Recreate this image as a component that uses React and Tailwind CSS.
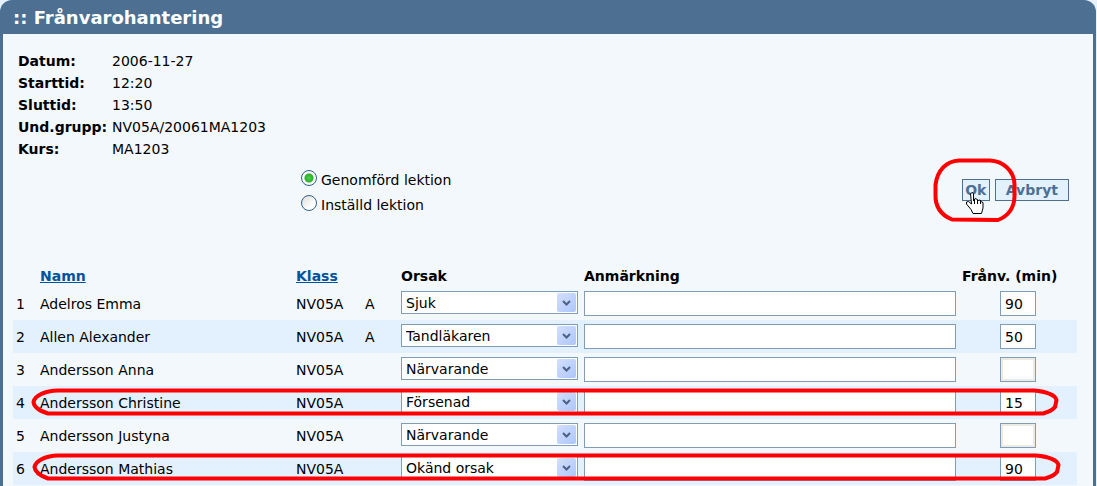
import React, { useState } from "react";

const details = [
  { label: "Datum:", value: "2006-11-27" },
  { label: "Starttid:", value: "12:20" },
  { label: "Sluttid:", value: "13:50" },
  { label: "Und.grupp:", value: "NV05A/20061MA1203" },
  { label: "Kurs:", value: "MA1203" },
];

const reasons = ["Närvarande", "Sjuk", "Tandläkaren", "Försenad", "Okänd orsak"];

const students = [
  { name: "Adelros Emma", group: "NV05A", flag: "A", reason: "Sjuk", minutes: "90" },
  { name: "Allen Alexander", group: "NV05A", flag: "A", reason: "Tandläkaren", minutes: "50" },
  { name: "Andersson Anna", group: "NV05A", flag: "", reason: "Närvarande", minutes: "" },
  { name: "Andersson Christine", group: "NV05A", flag: "", reason: "Försenad", minutes: "15" },
  { name: "Andersson Justyna", group: "NV05A", flag: "", reason: "Närvarande", minutes: "" },
  { name: "Andersson Mathias", group: "NV05A", flag: "", reason: "Okänd orsak", minutes: "90" },
];

// --- UI COMPONENTS ---

const Radio = ({ label, ...props }) => (
  <label className="flex h-6 items-center gap-1">
    <input
      type="radio"
      name="lesson"
      className="h-4 w-4 appearance-none rounded-full border border-[#2f5f8c] bg-[linear-gradient(135deg,#dcdcd6,#ffffff_70%)] checked:bg-[radial-gradient(circle_at_50%_50%,#4fd04a_0,#2bb02b_4px,#f8f8f6_5px)]"
      {...props}
    />
    <span className="pt-1">{label}</span>
  </label>
);

const ReasonSelect = ({ value, onChange, ...props }) => (
  <div className="relative">
    <select
      value={value}
      onChange={onChange}
      className="block h-[23px] w-full appearance-none border border-[#7f9db9] bg-white pr-6 pl-1 leading-5"
      {...props}
    >
      {reasons.map((reason) => (
        <option key={reason}>{reason}</option>
      ))}
    </select>
    <span className="pointer-events-none absolute top-0.5 right-0.5 flex h-[19px] w-[19px] items-center justify-center rounded-xs bg-linear-to-br from-[#d3dffe] to-[#adc6f8]">
      <svg width="9" height="6" viewBox="0 0 9 6" fill="none">
        <path d="M1 1L4.5 4.5L8 1" stroke="#4d6185" strokeWidth="2" />
      </svg>
    </span>
  </div>
);

const StudentRow = ({ index, student, onChange }) => (
  <tr className="h-[33px] even:bg-[#e3f1ff]">
    <td className="px-[3px]">{index + 1}</td>
    <td className="px-[3px]">{student.name}</td>
    <td className="px-[3px]">{student.group}</td>
    <td className="px-[3px]">{student.flag}</td>
    <td className="px-[3px] py-1 align-top">
      <ReasonSelect
        aria-label={`Orsak ${student.name}`}
        value={student.reason}
        onChange={(e) => onChange({ reason: e.target.value })}
      />
    </td>
    <td className="px-[3px] py-1">
      <input
        type="text"
        aria-label={`Anmärkning ${student.name}`}
        className="block h-[25px] w-full border border-[#7f9db9] bg-white px-1"
      />
    </td>
    <td className="px-[3px] py-1">
      <input
        type="text"
        aria-label={`Frånvaro ${student.name}`}
        value={student.minutes}
        disabled={student.reason === "Närvarande"}
        onChange={(e) => onChange({ minutes: e.target.value })}
        className="mx-auto block h-[25px] w-9 border border-[#7f9db9] bg-white px-1 disabled:inset-ring-2 disabled:inset-ring-[#ebebe4]"
      />
    </td>
  </tr>
);

// Red pen marks and the hand pointer on top of the form
const Annotations = () => (
  <svg
    className="pointer-events-none absolute top-0 left-0"
    width="1097"
    height="486"
    viewBox="0 0 1097 486"
    fill="none"
    aria-hidden="true"
  >
    <g stroke="#ff0000" strokeWidth="4" strokeLinejoin="round">
      <path d="M959 160.500H990C1003 161 1014 171 1014.500 184V197C1014 208 1008 216 998 220L952 219.500C941 215 935 206 935.500 194V185C937 171 946 161 959 160.500Z" />
      <path d="M58 390.500H1034C1046 391.500 1055 395 1056.500 400L1055 407C1052 411 1048 412 1043 413.500H48C40 411 34 408 33.500 402C35 395 45 391 58 390.500Z" />
      <path d="M58 455.500H1036C1048 456.500 1057 460 1058.500 465L1057 472C1054 476 1050 477 1045 478.500H48C41 476 35 473 34.500 467C36 460 46 456 58 455.500Z" />
    </g>
    <path
      d="M970.500 193.500L972.500 192.500L973.500 194V201L975 198.500L977.500 199.500L978 200.500L980 200L981.500 202L983 202.500V208L981.500 213.500H973L971 209.500L966.500 204V202L968.500 201.500L971.500 204Z"
      fill="#fff"
      stroke="#000"
    />
    <path d="M974.500 199V204M977.500 200V204M980.500 201V204" stroke="#000" />
  </svg>
);

// --- MAIN PAGE ---

export default function App() {
  const [rows, setRows] = useState(students);
  const [held, setHeld] = useState(true);

  const updateRow = (index, change) =>
    setRows(rows.map((row, i) => (i === index ? { ...row, ...change } : row)));

  return (
    <div className="relative min-h-screen overflow-hidden bg-[#e6f1fc] pr-px font-['DejaVu_Sans',Verdana,sans-serif] text-sm text-black">
      <main className="flex min-h-screen flex-col overflow-hidden rounded-t-xl bg-[#4d7092]">
        <h1 className="flex h-[34px] items-center px-[13px] pt-0.5 text-lg font-bold text-white">
          :: Frånvarohantering
        </h1>

        <form
          className="mx-[3px] flex-1 bg-[#f3f8fd] pt-4"
          onSubmit={(e) => e.preventDefault()}
        >
          <dl className="grid grid-cols-[94px_1fr] px-[15px] leading-[22px]">
            {details.map((item) => (
              <React.Fragment key={item.label}>
                <dt className="font-bold">{item.label}</dt>
                <dd>{item.value}</dd>
              </React.Fragment>
            ))}
          </dl>

          <div className="flex items-start justify-between pt-1.5 pr-6 pb-[50px] pl-[298px]">
            <fieldset className="flex flex-col gap-px">
              <Radio label="Genomförd lektion" checked={held} onChange={() => setHeld(true)} />
              <Radio label="Inställd lektion" checked={!held} onChange={() => setHeld(false)} />
            </fieldset>
            <div className="flex gap-[5px] pt-[13px] font-bold text-[#4d7092]">
              <button
                type="submit"
                className="h-[22px] w-7 border border-[#4d7092] bg-[#e3f1ff]"
              >
                Ok
              </button>
              <button
                type="button"
                className="h-[22px] border border-[#4d7092] bg-[#e3f1ff] px-2.5"
              >
                Avbryt
              </button>
            </div>
          </div>

          <div className="pr-4 pl-2.5">
            <table className="w-full table-fixed text-left">
              <thead>
                <tr className="h-[22px] whitespace-nowrap">
                  <th className="w-6" />
                  <th className="w-64 px-[3px]">
                    <a href="#" className="text-[#00529c] underline">
                      Namn
                    </a>
                  </th>
                  <th className="w-[69px] px-[3px]">
                    <a href="#" className="text-[#00529c] underline">
                      Klass
                    </a>
                  </th>
                  <th className="w-9" />
                  <th className="w-[183px] px-[3px]">Orsak</th>
                  <th className="px-[3px]">Anmärkning</th>
                  <th className="w-[118px] px-[3px]">Frånv. (min)</th>
                </tr>
              </thead>
              <tbody>
                {rows.map((student, index) => (
                  <StudentRow
                    key={student.name}
                    index={index}
                    student={student}
                    onChange={(change) => updateRow(index, change)}
                  />
                ))}
              </tbody>
            </table>
          </div>
        </form>
      </main>
      <Annotations />
    </div>
  );
}
